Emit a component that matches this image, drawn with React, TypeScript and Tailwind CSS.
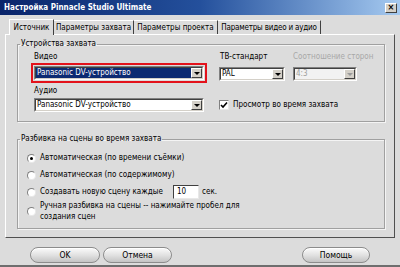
import { ReactNode } from 'react'

function DropBtn({ disabled }: { disabled?: boolean }) {
  return (
    <div className="w-[11px] h-full bg-[#d4d0c8] border border-t-white border-l-white border-r-[#404040] border-b-[#404040] flex items-center justify-center">
      <div className={`w-0 h-0 border-l-[3px] border-r-[3px] border-t-[3px] border-l-transparent border-r-transparent ${disabled ? 'border-t-[#9a9a9a]' : 'border-t-black'}`} />
    </div>
  )
}

function Combo({ value, selected, disabled, className }: { value: string; selected?: boolean; disabled?: boolean; className: string }) {
  return (
    <div className={`flex border border-t-[#808080] border-l-[#808080] border-r-white border-b-white ${className}`}>
      <div className={`flex-1 flex border border-t-[#404040] border-l-[#404040] border-r-[#d4d0c8] border-b-[#d4d0c8] ${disabled ? 'bg-[#f2f2f2]' : 'bg-white'}`}>
        <div className={`flex-1 flex items-center pl-[1px] leading-none ${selected ? 'bg-[#0c2a72] text-white' : ''} ${disabled ? 'text-[#a0a0a0]' : ''}`}>
          {value}
        </div>
        <DropBtn disabled={disabled} />
      </div>
    </div>
  )
}

function Radio({ checked, children }: { checked?: boolean; children: ReactNode }) {
  return (
    <div className="flex items-center">
      <div className="w-[9px] h-[9px] rounded-full bg-white border border-t-[#808080] border-l-[#808080] border-r-[#e8e8e8] border-b-[#e8e8e8] flex items-center justify-center shrink-0">
        {checked && <div className="w-[3px] h-[3px] rounded-full bg-black" />}
      </div>
      <div className="ml-[4px]">{children}</div>
    </div>
  )
}

function Group({ title, className, children }: { title: string; className: string; children: ReactNode }) {
  return (
    <fieldset className={`border border-[#a0a0a0] shadow-[inset_1px_1px_0_#f4f4f4,1px_1px_0_#f4f4f4] ${className}`}>
      <legend className="ml-[2px] px-[1px] leading-[12px]">{title}</legend>
      {children}
    </fieldset>
  )
}

function PillButton({ label, className }: { label: string; className: string }) {
  return (
    <button className={`h-[16px] rounded-full border border-[#8c8c8c] bg-linear-to-b from-[#fbfbfb] via-[#e2e2e2] to-[#c4c4c4] shadow-[inset_0_1px_0_white] flex items-center justify-center leading-none text-[8.5px] ${className}`}>
      {label}
    </button>
  )
}

function Tab({ label, className }: { label: string; className: string }) {
  return (
    <div className={`h-[14px] border-t border-r border-t-white border-r-[#404040] flex items-center justify-center whitespace-nowrap ${className}`}>
      {label}
    </div>
  )
}

export default function App() {
  return (
    <div className="w-[400px] h-[267px] bg-[#dcdcdc] flex flex-col overflow-hidden text-[8px] text-black font-['DejaVu_Sans_Condensed','Liberation_Sans',sans-serif] border-b-2 border-[#6e6e6e]">
      <div className="h-[15px] shrink-0 flex items-center justify-between pl-[4px] pr-[3px] bg-linear-to-r from-[#0a246a] via-[#24509c] to-[#a6caf0]">
        <span className="text-white font-bold text-[8px] leading-none">Настройка Pinnacle Studio Ultimate</span>
        <div className="w-[12px] h-[10px] bg-[#d4d0c8] border border-t-white border-l-white border-r-[#404040] border-b-[#404040] flex items-center justify-center text-[9px] font-bold leading-none">×</div>
      </div>

      <div className="flex items-end pl-[9px] mt-[4px] h-[15px] shrink-0">
        <div className="relative z-10 w-[45px] h-[16px] mb-[-1px] bg-[#dcdcdc] border border-b-0 border-t-white border-l-white border-r-[#404040] flex items-center justify-center">Источник</div>
        <Tab label="Параметры захвата" className="w-[80px]" />
        <Tab label="Параметры проекта" className="w-[84px]" />
        <Tab label="Параметры видео и аудио" className="w-[103px] tracking-[-0.2px]" />
      </div>

      <div className="mx-[5px] h-[204px] shrink-0 border border-t-white border-l-white border-r-[#505050] border-b-[#505050] flex flex-col pl-[11px] pr-[9px]">
        <Group title="Устройства захвата" className="mt-[3px] h-[84px]">
          <div className="flex pl-[13px] mt-[1px]">
            <div className="w-[176px] flex flex-col">
              <div className="leading-[12px] pl-[3px]">Видео</div>
              <div className="border-2 border-[#e3121b] p-[1px] h-[20px]">
                <Combo value="Panasonic DV-устройство" selected className="h-[14px]" />
              </div>
              <div className="leading-[12px] pl-[3px] mt-[2px]">Аудио</div>
              <Combo value="Panasonic DV-устройство" className="ml-[3px] mt-[1px] w-[170px] h-[14px]" />
            </div>
            <div className="w-[66px] ml-[12px] flex flex-col">
              <div className="leading-[12px] pl-[1px]">ТВ-стандарт</div>
              <Combo value="PAL" className="mt-[4px] h-[14px]" />
              <div className="mt-[18px] flex items-center whitespace-nowrap">
                <div className="w-[10px] h-[10px] bg-white border border-t-[#808080] border-l-[#808080] border-r-[#e8e8e8] border-b-[#e8e8e8] flex items-center justify-center shrink-0">
                  <svg width="8" height="8" viewBox="0 0 8 8"><path d="M1 4 L3 6 L7 1.5" stroke="black" strokeWidth="1.6" fill="none" /></svg>
                </div>
                <span className="ml-[4px]">Просмотр во время захвата</span>
              </div>
            </div>
            <div className="w-[64px] ml-[8px] flex flex-col">
              <div className="leading-[12px] whitespace-nowrap text-[#a8a8a8]">Соотношение сторон</div>
              <Combo value="4:3" disabled className="mt-[4px] h-[14px]" />
            </div>
          </div>
        </Group>

        <Group title="Разбивка на сцены во время захвата" className="mt-[11px] h-[96px]">
          <div className="flex flex-col pl-[9px] mt-[7px] leading-[12px]">
            <Radio checked>Автоматическая (по времени съёмки)</Radio>
            <div className="mt-[5px]">
              <Radio>Автоматическая (по содержимому)</Radio>
            </div>
            <div className="mt-[4px] h-[14px] flex items-center">
              <Radio>
                <div className="flex items-center">
                  <span className="w-[133px]">Создавать новую сцену каждые</span>
                  <div className="w-[26px] h-[14px] bg-white border border-t-[#404040] border-l-[#404040] border-r-[#e8e8e8] border-b-[#e8e8e8] flex items-center pl-[3px] leading-none">10</div>
                  <span className="ml-[3px]">сек.</span>
                </div>
              </Radio>
            </div>
            <div className="mt-[1px] leading-[11px]">
              <Radio>
                Ручная разбивка на сцены -- нажимайте пробел для
                <br />
                создания сцен
              </Radio>
            </div>
          </div>
        </Group>
      </div>

      <div className="flex mt-[9px] h-[16px] shrink-0">
        <PillButton label="OK" className="ml-[30px] w-[70px]" />
        <PillButton label="Отмена" className="ml-[3px] w-[69px]" />
        <PillButton label="Помощь" className="ml-auto mr-[30px] w-[68px]" />
      </div>
    </div>
  )
}
